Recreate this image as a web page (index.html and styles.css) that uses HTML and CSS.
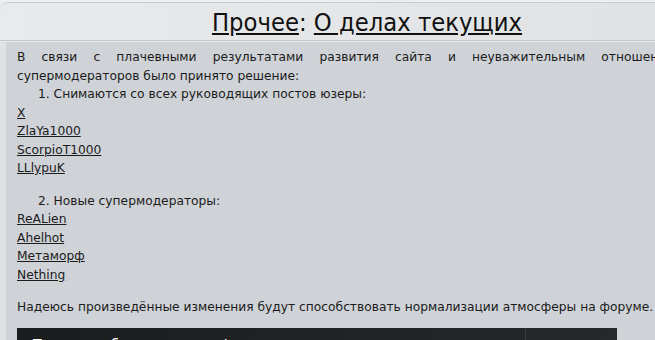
FILE: index.html
```html
<!DOCTYPE html>
<html lang="ru">
<head>
<meta charset="utf-8">
<title>Прочее: О делах текущих</title>
<link rel="stylesheet" href="styles.css">
</head>
<body>
<div class="page">
  <div class="topline"></div>
  <header class="head">
    <h1 class="title"><a href="#">Прочее</a>: <a href="#">О делах текущих</a></h1>
  </header>
  <main class="content">
    <div class="inner">
      <p class="just">В связи с плачевными результатами развития сайта и неуважительным отношением супермодераторов было принято решение:</p>
      <p class="item">1. Снимаются со всех руководящих постов юзеры:</p>
      <ul class="users">
        <li><a href="#">X</a></li>
        <li><a href="#">ZlaYa1000</a></li>
        <li><a href="#">ScorpioT1000</a></li>
        <li><a href="#">LLlypuK</a></li>
      </ul>
      <p class="item gap">2. Новые супермодераторы:</p>
      <ul class="users">
        <li><a href="#">ReALien</a></li>
        <li><a href="#">Ahelhot</a></li>
        <li><a href="#">Метаморф</a></li>
        <li><a href="#">Nething</a></li>
      </ul>
      <p class="gap">Надеюсь произведённые изменения будут способствовать нормализации атмосферы на форуме.</p>
      <div class="bar">
        <div class="bar-main">Текущие обсуждения на форуме</div>
        <div class="bar-side">▼ Настройки</div>
      </div>
    </div>
  </main>
</div>
</body>
</html>
```
FILE: styles.css
```css
html, body {
  margin: 0;
  padding: 0;
  overflow: hidden;
  background: #e8eaeb;
}
.page {
  width: 734px;
}
.topline {
  height: 2px;
  background: #eeeff0;
}
.head {
  height: 37px;
  border-top: 1px solid #c9ccce;
  border-bottom: 1px solid #c3c6c9;
  border-top-left-radius: 9px;
  background: linear-gradient(to right, #e9eaeb, #dfe1e3);
  display: flex;
  align-items: center;
  justify-content: center;
}
.title {
  margin: 0;
  font-family: "Liberation Sans Narrow", "DejaVu Sans Condensed", "Liberation Sans", sans-serif;
  font-stretch: condensed;
  font-weight: normal;
  font-size: 25.3px;
  color: #111;
  line-height: 30px;
  padding-top: 2px;
}
.title a {
  color: #111;
  text-decoration: underline;
}
.content {
  margin-top: 1px;
  padding-left: 6px;
  background: #dfe1e3;
}
.inner {
  background: #cfd3d7;
  padding: 6px 11px 10px 11px;
  font-family: "DejaVu Sans", Verdana, sans-serif;
  font-size: 12.25px;
  line-height: 18.5px;
  color: #1b1b1b;
}
.inner p {
  margin: 0;
}
.just {
  text-align: justify;
  max-width: 666px;
}
.item {
  padding-left: 21px;
}
.gap {
  margin-top: 14px !important;
}
.users {
  list-style: none;
  margin: 0;
  padding: 0;
}
.users a {
  color: #1b1b1b;
  text-decoration: underline;
}
.bar {
  margin-top: 11px;
  width: 600px;
  height: 30px;
  display: flex;
  background: linear-gradient(to right, #1b1c1d, #262829);
  color: #fff;
  font-size: 14px;
}
.bar-main {
  flex: 1;
  padding: 7px 0 0 16px;
}
.bar-side {
  box-sizing: border-box;
  width: 92px;
  border-left: 1px solid #3a3c3e;
  padding: 7px 0 0 14px;
}
```
